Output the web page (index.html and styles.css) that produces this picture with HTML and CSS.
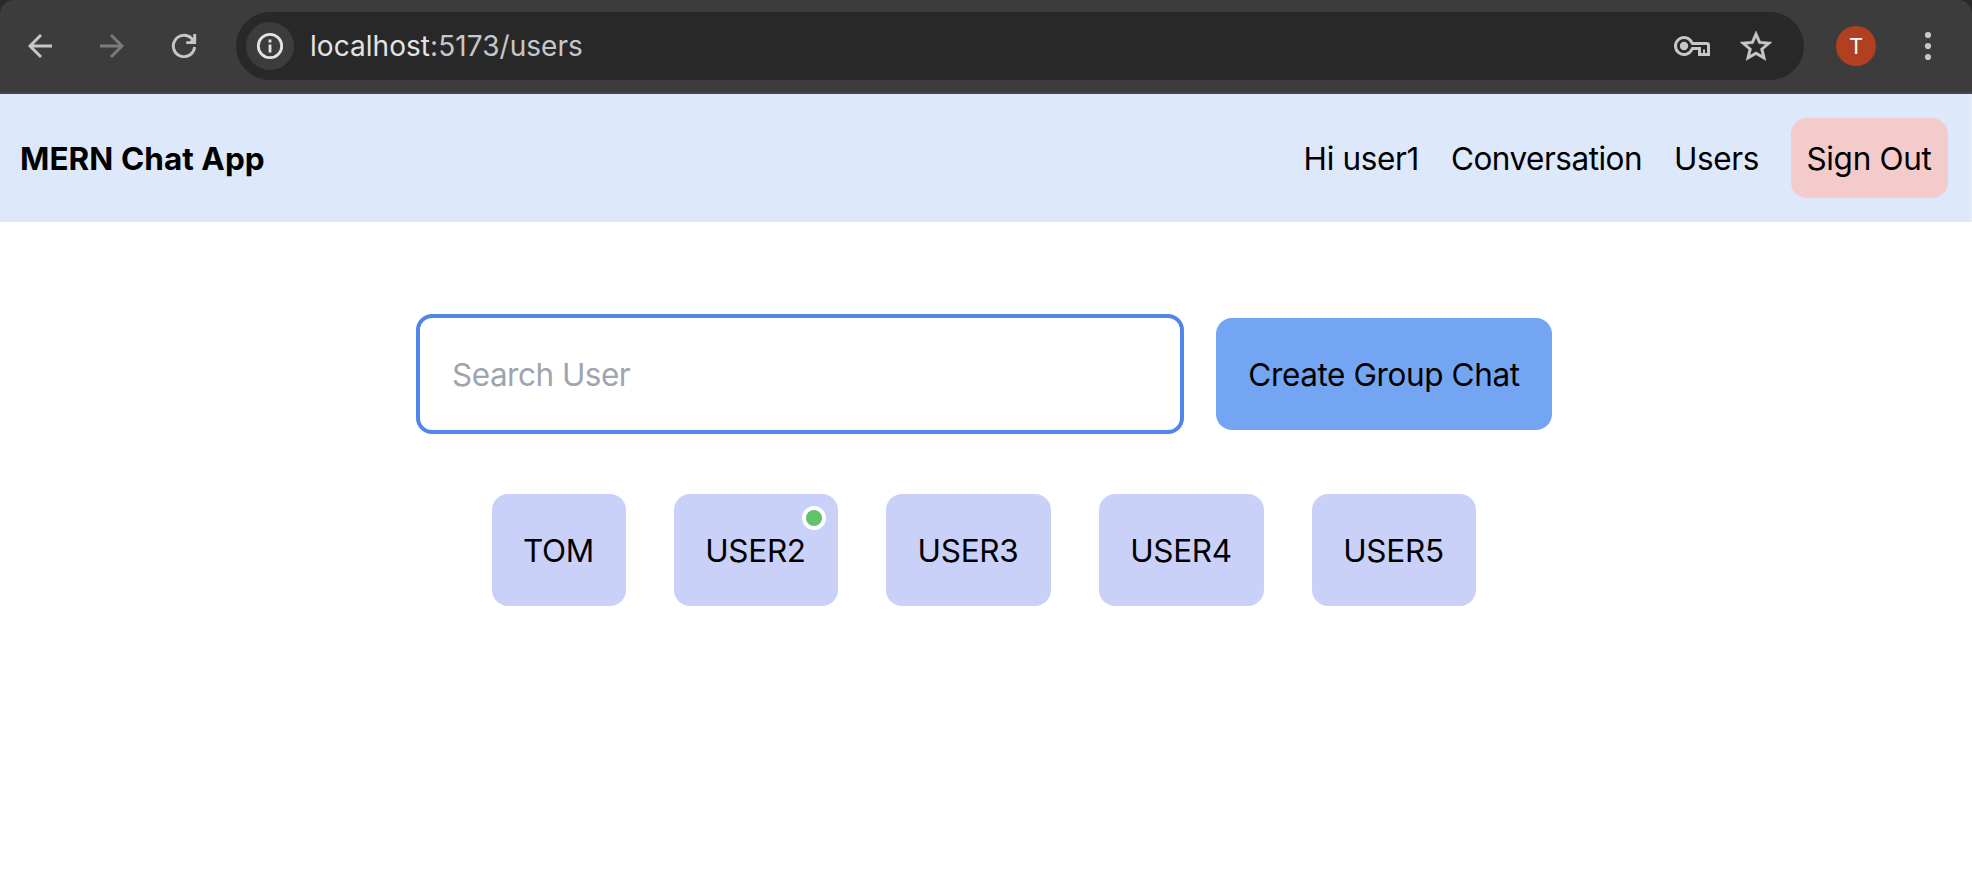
FILE: index.html
```html
<!DOCTYPE html>
<html lang="en">
<head>
<meta charset="utf-8">
<title>MERN Chat App</title>
<link rel="stylesheet" href="styles.css">
</head>
<body>
<div class="window">
  <div class="toolbar">
    <div class="toolbar-nav">
      <svg class="icon" width="32" height="32" viewBox="0 0 32 32"><path d="M28 16H6M17 5 6 16l11 11"/></svg>
      <svg class="icon icon-dim" width="32" height="32" viewBox="0 0 32 32"><path d="M4 16h22M15 5l11 11-11 11"/></svg>
      <svg class="icon" width="32" height="32" viewBox="0 0 32 32"><path d="M26.6 17a10.65 10.65 0 1 1-2.9-8.4l2.4 2.6"/><path d="M26.7 4v8.6H18.2"/><path class="solid" d="m21.5 12.5 2-4 3.5-1v5z"/></svg>
    </div>
    <div class="address">
      <div class="site-info">
        <svg class="icon icon-info" width="32" height="32" viewBox="0 0 32 32"><circle cx="16" cy="16" r="11.7"/><path d="M16 14.5v8M16 9.4v3"/></svg>
      </div>
      <div class="url"><span class="host">localhost</span>:5173/users</div>
      <svg class="icon icon-key" width="38" height="32" viewBox="0 0 38 32"><path d="M17.3 13.4H33a1.5 1.5 0 0 1 1.5 1.5v9.6h-9v-6h-8.2"/><path d="M18.1 13.4a8.5 8.5 0 1 0 0 5.2"/><circle class="solid" cx="10" cy="16" r="4.2"/><path class="thin" d="M30 19.5v4"/></svg>
      <svg class="icon icon-star" width="36" height="36" viewBox="0 0 36 36"><path class="solid star" transform="translate(-1.2 -.1) scale(1.6 1.55)" d="M22 9.24l-7.19-.62L12 2 9.19 8.63 2 9.24l5.46 4.73L5.82 21 12 17.27 18.18 21l-1.63-7.03L22 9.24zM12 15.4l-3.76 2.27 1-4.28-3.32-2.88 4.38-.38L12 6.1l1.71 4.04 4.38.38-3.32 2.88 1 4.28L12 15.4z"/></svg>
    </div>
    <div class="avatar">T</div>
    <svg class="menu" width="8" height="32" viewBox="0 0 8 32"><circle cx="4" cy="5" r="3.1"/><circle cx="4" cy="16" r="3.1"/><circle cx="4" cy="27" r="3.1"/></svg>
  </div>
  <header class="navbar">
    <div class="brand">MERN Chat App</div>
    <nav class="links">
      <span class="greeting">Hi user1</span>
      <a class="link-conversation">Conversation</a>
      <a class="link-users">Users</a>
      <button class="sign-out">Sign Out</button>
    </nav>
  </header>
  <main class="page">
    <div class="search-row">
      <input class="search" type="text" placeholder="Search User">
      <button class="create">Create Group Chat</button>
    </div>
    <div class="users">
      <div class="user user-tom">TOM</div>
      <div class="user user-narrow">USER2<span class="online"></span></div>
      <div class="user">USER3</div>
      <div class="user">USER4</div>
      <div class="user user-narrow">USER5</div>
    </div>
  </main>
</div>
</body>
</html>
```
FILE: styles.css
```css
* { box-sizing: border-box; }
body {
  margin: 0;
  background: #fff;
  color: #000;
  font-family: Inter, "Liberation Sans", sans-serif;
  font-size: 31.5px;
  line-height: 48px;
}
button, input { font: inherit; color: inherit; border: 0; margin: 0; }
.window { min-height: 874px; background: linear-gradient(#292929, #292929) top / 100% 20px no-repeat; }

.toolbar {
  display: flex;
  align-items: center;
  height: 94px;
  padding: 0 40px 0 24px;
  background: #3c3c3c;
  border-bottom: 2px solid #474747;
  border-radius: 14px 14px 0 0;
}
.toolbar-nav { display: flex; gap: 40px; }
.icon { display: block; flex: none; fill: none; stroke: #c7c7c7; stroke-width: 2.9; }
.icon .solid { fill: #c7c7c7; stroke: none; }
.icon .star { stroke: #c7c7c7; stroke-width: 0.3; }
.icon-dim { stroke: #7b7b7b; }
.icon-info { stroke: #e3e3e3; stroke-width: 2.8; }
.icon-key { stroke-width: 3; }
.icon-key .thin { stroke-width: 2; }
.icon-star { margin-left: 26px; }
.address {
  display: flex;
  align-items: center;
  width: 1568px;
  height: 68px;
  margin-left: 36px;
  padding: 0 30px 0 10px;
  border-radius: 34px;
  background: #282828;
}
.site-info {
  display: flex;
  align-items: center;
  justify-content: center;
  width: 48px;
  height: 48px;
  border-radius: 50%;
  background: #3c3c3c;
}
.url {
  flex: 1;
  margin-left: 16px;
  color: #c7c7c7;
  font-size: 28px;
  letter-spacing: 0.05px;
}
.host { color: #e3e3e3; }
.avatar {
  width: 40px;
  height: 40px;
  margin-left: 32px;
  border-radius: 50%;
  background: #b04020;
  color: #fff;
  font-size: 22px;
  line-height: 40px;
  text-align: center;
}
.menu { margin-left: 48px; fill: #c7c7c7; }

.navbar {
  display: flex;
  align-items: center;
  justify-content: space-between;
  height: 128px;
  padding: 0 22px 0 20px;
  background: #dde8fb;
  border-right: 2px solid #e4edfc;
}
.brand { padding-top: 2px; font-weight: 700; letter-spacing: 0.05px; }
.links { display: flex; align-items: center; gap: 32px; white-space: nowrap; }
.links span, .links a { padding-top: 2px; }
.greeting { letter-spacing: -0.35px; }
.link-conversation { letter-spacing: -0.5px; }
.link-users { letter-spacing: -0.4px; }
.sign-out {
  width: 157px;
  height: 80px;
  padding: 2px 1px 0 0;
  border-radius: 16px;
  background: #f4cbcb;
  letter-spacing: -0.3px;
}

.page { padding: 92px 4px 0 0; }
.search-row { display: flex; align-items: center; justify-content: center; gap: 32px; }
.search {
  width: 768px;
  height: 120px;
  padding: 0 32px;
  border: 4px solid #5085ee;
  border-radius: 16px;
  background: #fff;
  outline: 0;
  letter-spacing: -0.5px;
}
.search::placeholder { color: #9fa5b0; opacity: 1; }
.create {
  width: 336px;
  height: 112px;
  padding: 2px 0 0;
  border-radius: 16px;
  background: #74a5f2;
  letter-spacing: -0.4px;
  white-space: nowrap;
}
.users { display: flex; justify-content: center; gap: 48px; margin-top: 60px; }
.user {
  position: relative;
  width: 165px;
  height: 112px;
  padding-right: 1px;
  border-radius: 16px;
  background: #cad1f9;
  letter-spacing: -0.3px;
  line-height: 114px;
  text-align: center;
}
.user-narrow { width: 164px; }
.user-tom { width: 134px; }
.online {
  position: absolute;
  top: 12px;
  right: 12px;
  width: 24px;
  height: 24px;
  border: 4px solid #fff;
  border-radius: 50%;
  background: #63c169;
}
```
